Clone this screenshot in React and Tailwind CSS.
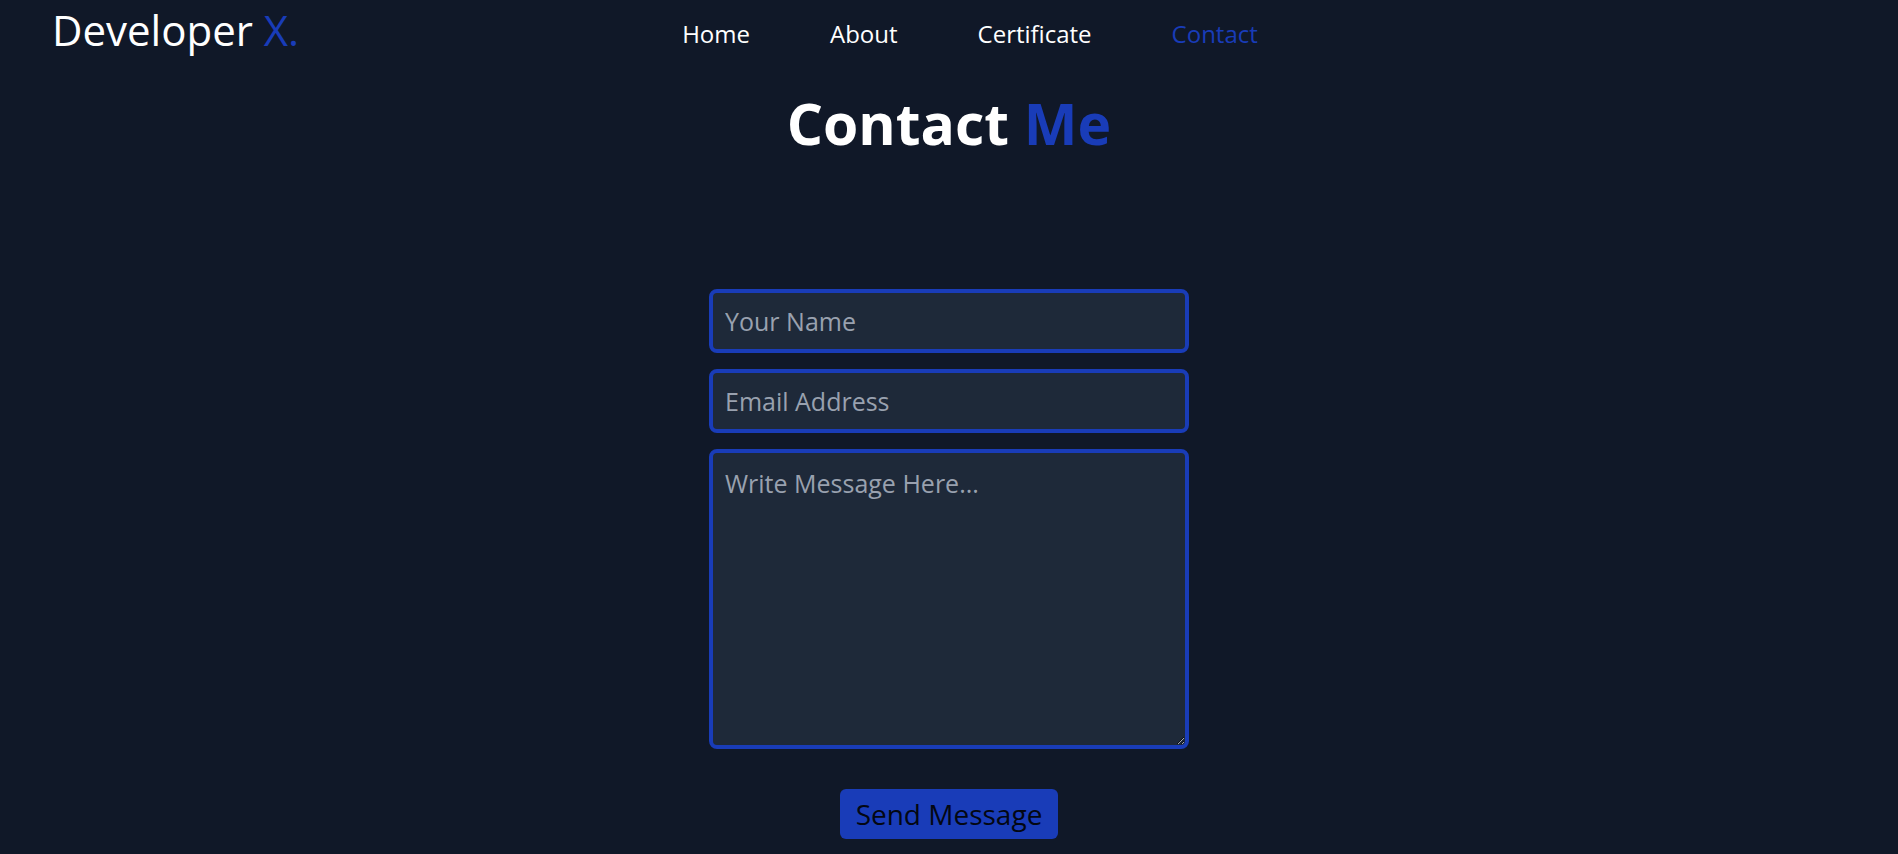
import React from 'react'

const Navbar = () => {
    return (
        <div className="flex items-center px-[52px] h-[60px]">
            <p className="text-[42px] leading-none text-white">
                Developer <span className="text-blue-800">X.</span>
            </p>
            <ul className="flex items-center gap-20 ml-[383px] mt-[8px] text-2xl text-white">
                <li>Home</li>
                <li>About</li>
                <li>Certificate</li>
                <li className="text-blue-800">Contact</li>
            </ul>
        </div>
    )
}

const Contact = () => {
    return (
        <div className="flex flex-col items-center">
            <h1 className="text-[57px] leading-none font-bold text-white mt-[35px]">
                Contact <span className="text-blue-800">Me</span>
            </h1>

            <form className="flex flex-col items-center mt-[137px] w-[480px]">
                <div className="flex flex-col gap-4 w-full">
                    <input
                        type="text"
                        placeholder="Your Name"
                        className="w-full h-[64px] px-3 text-[25px] bg-gray-800 border-4 border-blue-800 rounded-lg text-white placeholder:text-gray-400 outline-none"
                    />
                    <input
                        type="email"
                        placeholder="Email Address"
                        className="w-full h-[64px] px-3 text-[25px] bg-gray-800 border-4 border-blue-800 rounded-lg text-white placeholder:text-gray-400 outline-none"
                    />
                    <textarea
                        placeholder="Write Message Here..."
                        className="w-full h-[300px] px-3 py-3 text-[25px] bg-gray-800 border-4 border-blue-800 rounded-lg text-white placeholder:text-gray-400 outline-none"
                    />
                </div>
                <button
                    type="button"
                    className="mt-10 h-[50px] px-4 bg-blue-800 rounded-md text-[28px] text-gray-950"
                >
                    Send Message
                </button>
            </form>
        </div>
    )
}

export default function App() {
    return (
        <div
            className="min-h-screen bg-gray-900"
            style={{ fontFamily: '"Open Sans", "Noto Sans", sans-serif' }}
        >
            <Navbar />
            <Contact />
        </div>
    )
}
